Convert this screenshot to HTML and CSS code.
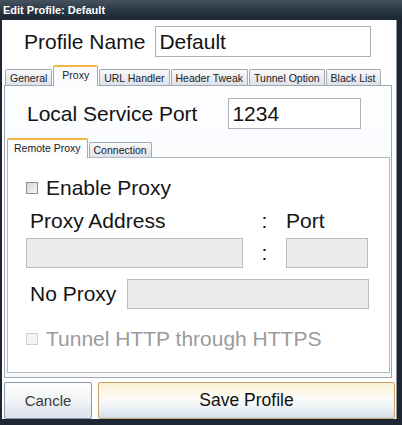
FILE: index.html
```html
<!DOCTYPE html>
<html>

<head>
    <title>Edit Profile: Default</title>
    <link rel="stylesheet" href="styles.css">
</head>

<body>
    <div class="window">
        <div class="titlebar">Edit Profile: Default</div>
        <div class="client">
            <div class="name-row">
                <label class="big-label" for="profileName">Profile Name</label>
                <input id="profileName" class="field name-field" type="text" value="Default">
            </div>

            <div class="tabs">
                <div class="tab">General</div>
                <div class="tab selected">Proxy</div>
                <div class="tab">URL Handler</div>
                <div class="tab">Header Tweak</div>
                <div class="tab">Tunnel Option</div>
                <div class="tab">Black List</div>
            </div>
            <div class="panel">
                <div class="port-row">
                    <label class="big-label" for="localPort">Local Service Port</label>
                    <input id="localPort" class="field port-field" type="text" value="1234">
                </div>

                <div class="inner">
                    <div class="tabs inner-tabs">
                        <div class="tab selected">Remote Proxy</div>
                        <div class="tab">Connection</div>
                    </div>
                    <div class="inner-panel">
                        <div class="check-row">
                            <span class="check"></span>
                            <span class="big-label">Enable Proxy</span>
                        </div>

                        <div class="addr-grid labels">
                            <span class="big-label addr-label">Proxy Address</span>
                            <span class="big-label colon">:</span>
                            <span class="big-label">Port</span>
                        </div>
                        <div class="addr-grid inputs">
                            <input class="field off" type="text" disabled>
                            <span class="big-label colon">:</span>
                            <input class="field off" type="text" disabled>
                        </div>

                        <div class="noproxy-row">
                            <span class="big-label">No Proxy</span>
                            <input class="field off noproxy-field" type="text" disabled>
                        </div>

                        <div class="check-row dim">
                            <span class="check"></span>
                            <span class="big-label">Tunnel HTTP through HTTPS</span>
                        </div>
                    </div>
                </div>
            </div>

            <div class="buttons">
                <button class="btn cancel">Cancle</button>
                <button class="btn save">Save Profile</button>
            </div>
        </div>
    </div>
</body>

</html>
```

FILE: styles.css
```css
body {
    margin: 0;
    padding: 0;
    font-family: "Liberation Sans", Arial, sans-serif;
    background: #1d2632;
}

.window {
    width: 402px;
    height: 425px;
    display: flex;
    flex-direction: column;
    background: #1d2632;
}

.titlebar {
    height: 20px;
    line-height: 21px;
    padding-left: 3px;
    color: #ffffff;
    font-weight: bold;
    font-size: 11px;
    background: linear-gradient(#46525f, #27323f 60%, #1d2836);
    flex: none;
}

.client {
    flex: none;
    height: 399px;
    margin: 0 5px 0 2px;
    background: #ffffff;
    border-right: 1px solid #8c939c;
    box-sizing: border-box;
    display: flex;
    flex-direction: column;
}

.big-label {
    font-size: 21px;
    color: #141414;
    line-height: 24px;
}

.field {
    box-sizing: border-box;
    height: 31px;
    border: 1px solid #aeb1b5;
    background: #ffffff;
    font-family: "Liberation Sans", Arial, sans-serif;
    font-size: 21px;
    color: #111111;
    padding: 0 3px;
    margin: 0;
    outline: none;
}

.field.off {
    height: 30px;
    background: #ebebeb;
    border-color: #bcbcbc;
}

/* top row */
.name-row {
    height: 45px;
    box-sizing: border-box;
    padding: 6px 0 8px 22px;
    display: flex;
    align-items: center;
    gap: 10px;
}

.name-field {
    width: 216px;
}

/* tab strips */
.tabs {
    height: 20px;
    padding-left: 3px;
    display: flex;
    align-items: flex-end;
    gap: 1px;
    position: relative;
    z-index: 1;
}

.tab {
    height: 16px;
    box-sizing: border-box;
    padding: 0 4px;
    font-size: 10.5px;
    line-height: 16px;
    color: #222222;
    border: 1px solid #a3aab3;
    border-bottom: none;
    border-radius: 2px 2px 0 0;
    background: linear-gradient(#fafafa, #e9ecf0 50%, #dde2e9);
}

.tab.selected {
    height: 21px;
    margin-bottom: -1px;
    padding: 0 8px;
    line-height: 17px;
    border-top: 2px solid #f2b545;
    background: #fbfcfe;
}

.panel {
    margin: 0 4px 0 2px;
    border: 1px solid #a3a8ae;
    background: linear-gradient(#fcfdff, #f8f9fc);
    padding-bottom: 4px;
}

.port-row {
    padding: 12px 0 0 22px;
    height: 31px;
    display: flex;
    align-items: center;
    gap: 31px;
}

.port-field {
    width: 133px;
}

.inner {
    margin: 9px 1px 0 2px;
}

.inner-tabs {
    height: 19px;
    padding-left: 0;
}

.inner-tabs .tab {
    height: 15px;
    line-height: 15px;
}

.inner-tabs .tab.selected {
    height: 20px;
    padding: 0 6px;
    line-height: 16px;
}

.inner-panel {
    border: 1px solid #b5b8bc;
    background: #ffffff;
    padding: 18px 0 21px 0;
}

.check-row {
    height: 24px;
    padding-left: 18px;
    display: flex;
    align-items: center;
    gap: 8px;
}

.check {
    width: 12px;
    height: 12px;
    box-sizing: border-box;
    border: 1px solid #8e8e8e;
    background: linear-gradient(135deg, #d6d6d6, #f7f7f7);
}

.check-row.dim .check {
    border-color: #cdcdcd;
    background: #f5f5f5;
}

.check-row.dim .big-label {
    color: #9b9b9b;
}

.addr-grid {
    display: grid;
    grid-template-columns: 217px 43px 82px;
    padding-left: 18px;
    align-items: center;
}

.addr-grid.labels {
    margin-top: 9px;
}

.addr-grid.inputs {
    margin-top: 5px;
}

.addr-label {
    padding-left: 4px;
}

.colon {
    text-align: center;
}

.addr-grid .field {
    width: 100%;
}

.noproxy-row {
    margin-top: 11px;
    padding-left: 22px;
    display: flex;
    align-items: center;
    gap: 11px;
}

.noproxy-field {
    width: 242px;
}

.dim {
    margin-top: 18px;
}

/* bottom buttons */
.buttons {
    margin: 4px 1px 0 2px;
    height: 37px;
    display: flex;
    gap: 6px;
}

.btn {
    height: 37px;
    box-sizing: border-box;
    border-radius: 2px;
    font-family: "Liberation Sans", Arial, sans-serif;
    padding: 0;
    cursor: pointer;
}

.cancel {
    width: 88px;
    font-size: 15px;
    color: #3a3a3a;
    border: 1px solid #8d9aab;
    background: linear-gradient(#fdfdfd, #f1f3f6 50%, #dbe2eb);
}

.save {
    flex: 1;
    font-size: 17.5px;
    color: #111111;
    border: 1px solid #c9a56a;
    background: linear-gradient(#fbf1d3, #fbfbf8 45%, #eef2f7 70%, #d2ddeb);
}
```
